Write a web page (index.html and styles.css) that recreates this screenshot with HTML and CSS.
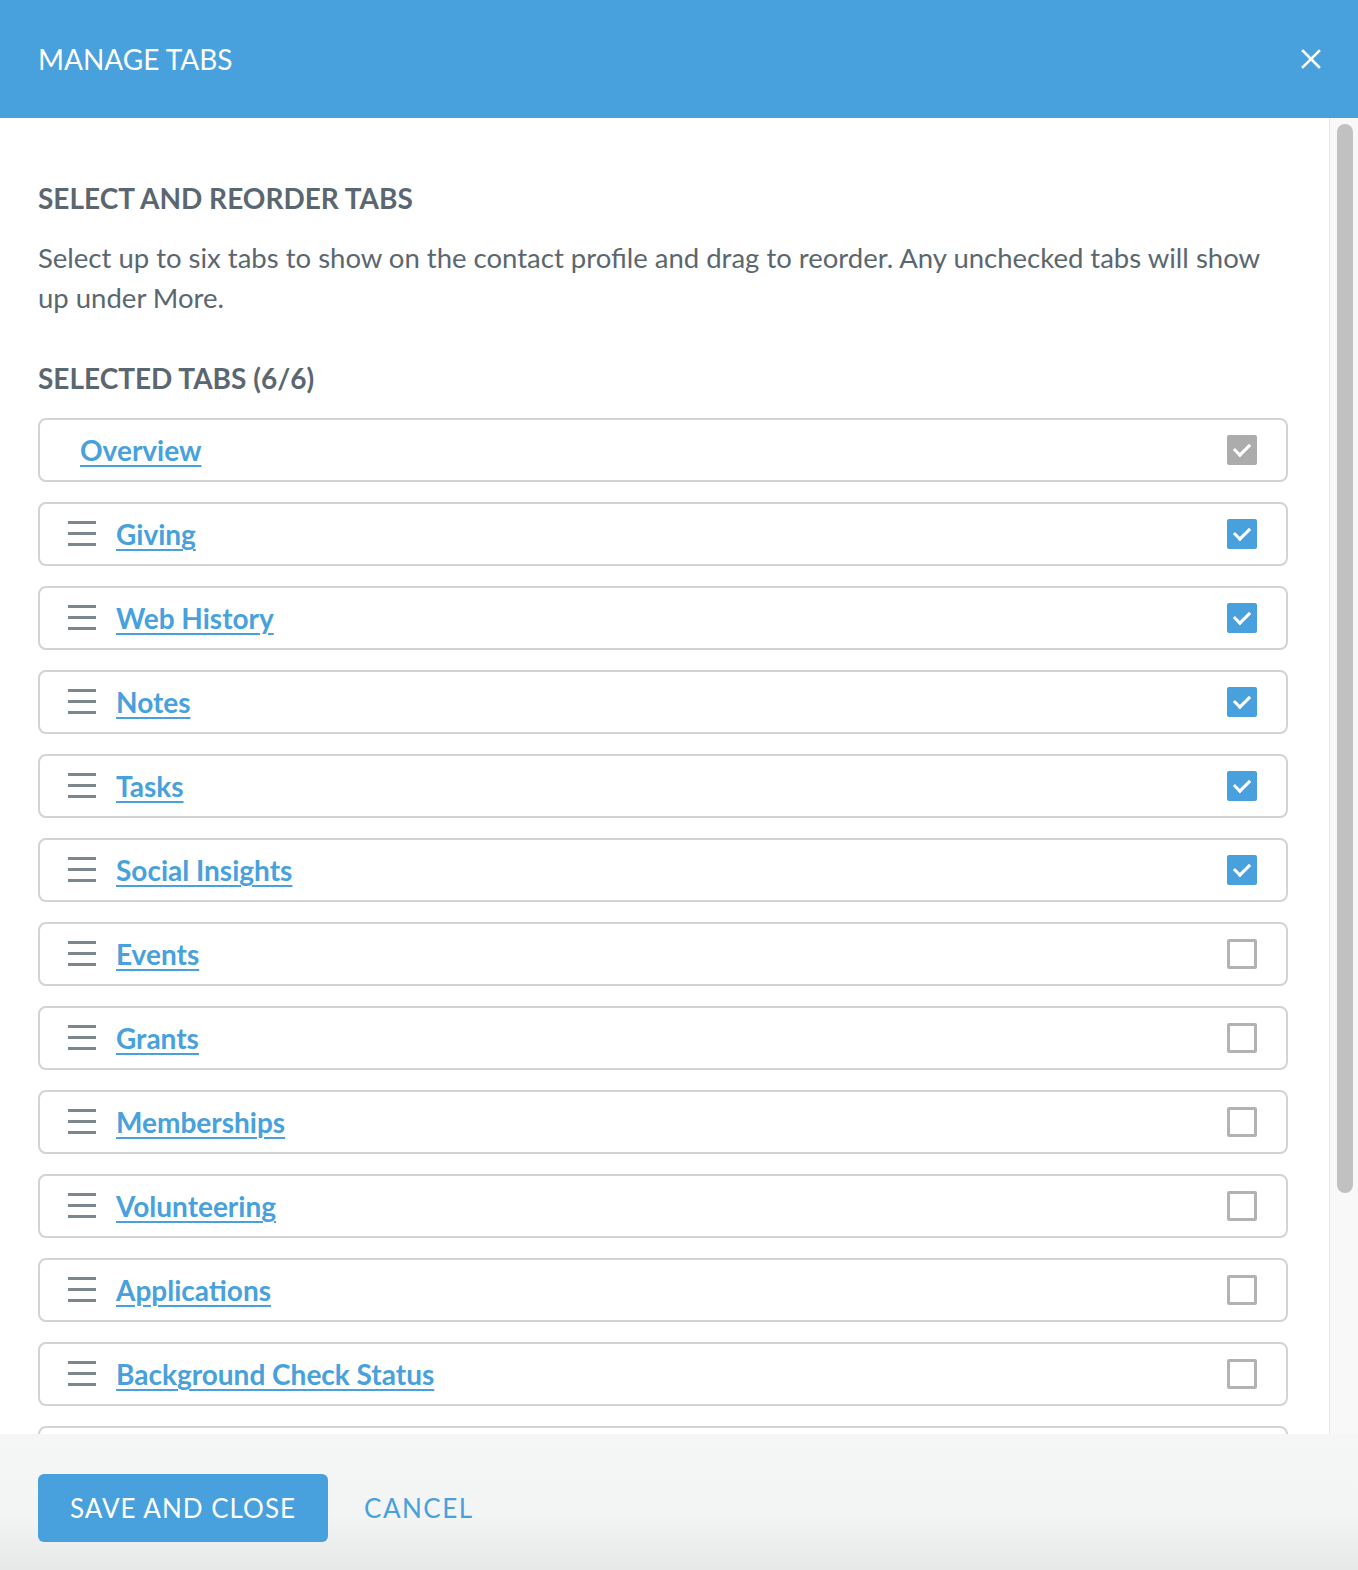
FILE: index.html
```html
<!DOCTYPE html>
<html lang="en">
<head>
    <meta charset="UTF-8">
    <meta name="viewport" content="width=device-width, initial-scale=1.0">
    <title>Manage Tabs</title>
    <link rel="stylesheet" href="styles.css">
</head>
<body>
    <div class="modal">
        <div class="modal-header">
            <h1>MANAGE TABS</h1>
            <a class="close-btn" href="#" aria-label="Close">
                <svg width="20" height="20" viewBox="0 0 20 20">
                    <path d="M2 2 L18 18 M18 2 L2 18" stroke="#fff" stroke-width="2.6" stroke-linecap="square"/>
                </svg>
            </a>
        </div>

        <div class="modal-body">
            <div class="content">
                <h2>SELECT AND REORDER TABS</h2>
                <p class="intro">Select up to six tabs to show on the contact profile and drag to reorder. Any unchecked tabs will show up under More.</p>

                <h2 class="list-title">SELECTED TABS (6/6)</h2>

                <ul class="tab-list">
                    <li class="tab-row fixed">
                        <a href="#">Overview</a>
                        <span class="check locked"></span>
                    </li>
                    <li class="tab-row"><span class="handle"></span><a href="#">Giving</a><span class="check on"></span></li>
                    <li class="tab-row"><span class="handle"></span><a href="#">Web History</a><span class="check on"></span></li>
                    <li class="tab-row"><span class="handle"></span><a href="#">Notes</a><span class="check on"></span></li>
                    <li class="tab-row"><span class="handle"></span><a href="#">Tasks</a><span class="check on"></span></li>
                    <li class="tab-row"><span class="handle"></span><a href="#">Social Insights</a><span class="check on"></span></li>
                    <li class="tab-row"><span class="handle"></span><a href="#">Events</a><span class="check"></span></li>
                    <li class="tab-row"><span class="handle"></span><a href="#">Grants</a><span class="check"></span></li>
                    <li class="tab-row"><span class="handle"></span><a href="#">Memberships</a><span class="check"></span></li>
                    <li class="tab-row"><span class="handle"></span><a href="#">Volunteering</a><span class="check"></span></li>
                    <li class="tab-row"><span class="handle"></span><a href="#">Applications</a><span class="check"></span></li>
                    <li class="tab-row"><span class="handle"></span><a href="#">Background Check Status</a><span class="check"></span></li>
                    <li class="tab-row"></li>
                </ul>
            </div>
            <div class="scroll-track">
                <div class="scroll-thumb"></div>
            </div>
        </div>

        <div class="modal-footer">
            <button class="btn-save">SAVE AND CLOSE</button>
            <a class="btn-cancel" href="#">CANCEL</a>
        </div>
    </div>
</body>
</html>
```

FILE: styles.css
```css
body {
    margin: 0;
    font-family: Lato, 'Open Sans', sans-serif;
    color: #5b6770;
    background-color: #fff;
}

.modal {
    height: 1570px;
    display: flex;
    flex-direction: column;
    overflow: hidden;
}

.modal-header {
    height: 118px;
    flex-shrink: 0;
    background-color: #48a1dc;
    display: flex;
    align-items: center;
    justify-content: space-between;
    padding: 0 38px;
}

.modal-header h1 {
    margin: 0;
    font-size: 28px;
    font-weight: 400;
    color: #fff;
}

.close-btn {
    display: flex;
    margin-right: -1px;
}

.modal-body {
    flex: 1;
    display: flex;
    overflow: hidden;
}

.content {
    flex: 1;
    padding: 64px 41px 0 38px;
}

h2 {
    margin: 0;
    font-size: 28px;
    font-weight: 700;
    color: #5b6770;
    line-height: 32px;
}

.intro {
    margin: 24px 0 0;
    font-size: 27.5px;
    line-height: 40px;
}

.list-title {
    margin-top: 44px;
}

.tab-list {
    list-style: none;
    margin: 24px 0 0;
    padding: 0;
}

.tab-row {
    box-sizing: border-box;
    height: 64px;
    margin-bottom: 20px;
    border: 2px solid #d3d3d3;
    border-radius: 8px;
    display: flex;
    align-items: center;
    padding: 0 29px 0 28px;
}

.tab-row.fixed {
    padding-left: 40px;
}

.tab-row a {
    font-size: 28px;
    font-weight: 700;
    color: #48a1dc;
    text-decoration: underline;
    text-decoration-thickness: 2px;
    text-underline-offset: 4px;
    margin-right: auto;
}

.handle {
    width: 28px;
    height: 25px;
    margin-right: 20px;
    background: linear-gradient(#7b868d, #7b868d) 0 0 / 100% 3px no-repeat,
                linear-gradient(#7b868d, #7b868d) 0 11px / 100% 3px no-repeat,
                linear-gradient(#7b868d, #7b868d) 0 22px / 100% 3px no-repeat;
    margin-top: -2px;
}

.check {
    box-sizing: border-box;
    width: 30px;
    height: 30px;
    border: 3px solid #b3b3b3;
    border-radius: 2px;
    position: relative;
}

.check.on,
.check.locked {
    border: none;
    background-color: #48a1dc;
}

.check.locked {
    background-color: #acacac;
}

.check.on::after,
.check.locked::after {
    content: "";
    position: absolute;
    left: 10px;
    top: 5px;
    width: 7px;
    height: 13px;
    border-right: 3px solid #fff;
    border-bottom: 3px solid #fff;
    transform: rotate(45deg);
}

.scroll-track {
    width: 29px;
    flex-shrink: 0;
    border-left: 1px solid #e8e8e8;
    background-color: #f8f8f8;
    padding: 6px 0 0 7px;
    box-sizing: border-box;
}

.scroll-thumb {
    width: 16px;
    height: 1069px;
    border-radius: 8px;
    background-color: #c1c1c1;
}

.modal-footer {
    height: 136px;
    flex-shrink: 0;
    box-sizing: border-box;
    background: linear-gradient(#f5f6f6, #f3f4f4 60%, #e7e8e8);
    display: flex;
    align-items: center;
    padding: 12px 38px 0;
}

.btn-save {
    height: 68px;
    padding: 0 32px;
    border: none;
    border-radius: 6px;
    background-color: #48a1dc;
    color: #fff;
    font-family: Lato, sans-serif;
    font-size: 26px;
    letter-spacing: 1px;
    cursor: pointer;
}

.btn-cancel {
    margin-left: 36px;
    color: #48a1dc;
    font-size: 26px;
    letter-spacing: 1.5px;
    text-decoration: none;
}
```
